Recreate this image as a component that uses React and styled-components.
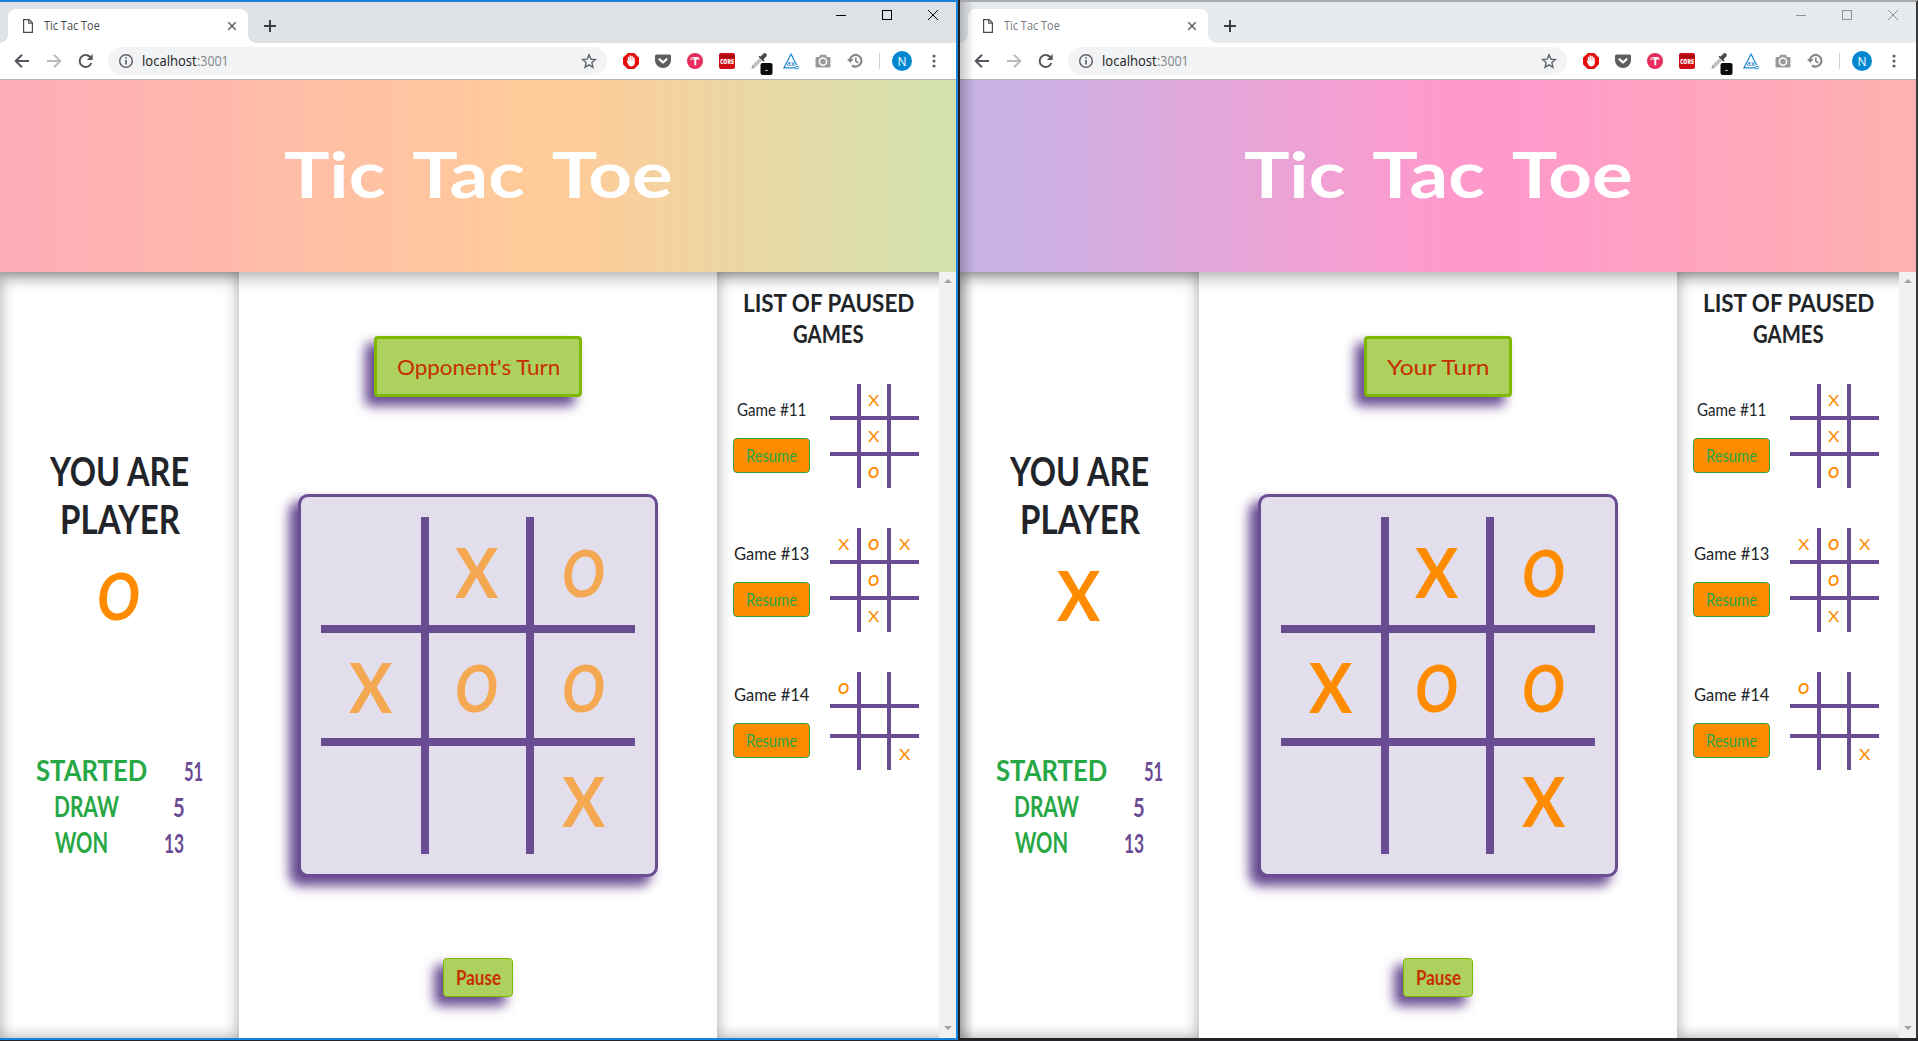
import React, { useLayoutEffect, useRef, useState } from "react";
import styled, { createGlobalStyle } from "styled-components";

const GlobalStyle = createGlobalStyle`
  * { box-sizing: border-box; }
  body { margin: 0; background: #1b1b1b; overflow: hidden; }
`;

const purple = "#6a4c93";
const uiFont = `"Open Sans", "Noto Sans", sans-serif`;
const handFont = `Lato, "Open Sans", sans-serif`;

/* ---------- text that fills a known width ---------- */

const FitBox = styled.span`
  display: block;
  flex: none;
  width: ${(p) => p.$width}px;
  height: ${(p) => p.$line}px;
  line-height: ${(p) => p.$line}px;
  font-size: ${(p) => p.$size}px;
  font-weight: ${(p) => p.$weight || 400};
  font-style: ${(p) => (p.$italic ? "italic" : "normal")};
  color: ${(p) => p.$color || "inherit"};
  word-spacing: ${(p) => p.$word || 0}px;
`;

const FitInner = styled.span`
  display: inline-block;
  vertical-align: top;
  white-space: nowrap;
  transform-origin: 0 50%;
`;

function Fit({ children, width, ...rest }) {
  const ref = useRef(null);
  const [scale, setScale] = useState(1);
  useLayoutEffect(() => {
    setScale(width / ref.current.offsetWidth);
  }, [width, children]);
  return (
    <FitBox $width={width} {...rest}>
      <FitInner ref={ref} style={{ transform: `scaleX(${scale})` }}>
        {children}
      </FitInner>
    </FitBox>
  );
}

/* ---------- desktop and window frame ---------- */

const Desktop = styled.div`
  display: flex;
  width: 1918px;
  height: 1041px;
  gap: 2px;
  background: #222326;
`;

const Frame = styled.div`
  flex: none;
  width: 958px;
  height: ${(p) => (p.$active ? 1040 : 1038)}px;
  border-top: 2px solid ${(p) => (p.$active ? "#1883d7" : "#aaaaaa")};
  border-right: 2px solid ${(p) => (p.$active ? "#1883d7" : "#38393b")};
  border-bottom: ${(p) => (p.$active ? "2px solid #1883d7" : "0")};
  background: #fff;
  overflow: hidden;
  display: flex;
  flex-direction: column;
  position: relative;
`;

const NeighbourShade = styled.div`
  position: absolute;
  z-index: 5;
  top: 0;
  bottom: 0;
  left: 0;
  width: 14px;
  background: linear-gradient(to right, rgba(0, 0, 0, 0.22), rgba(0, 0, 0, 0));
`;

const TabStrip = styled.div`
  height: 41px;
  flex: none;
  display: flex;
  padding: 7px 0 0 8px;
  background: ${(p) => (p.$active ? "#dee1e6" : "#e7eaed")};
`;

const Tab = styled.div`
  position: relative;
  width: 240px;
  height: 34px;
  border-radius: 8px 8px 0 0;
  background: #fff;
  display: flex;
  align-items: center;
  padding: 0 12px 0 15px;
  color: ${(p) => (p.$active ? "#45494d" : "#75797d")};
  font-family: ${uiFont};

  &::before,
  &::after {
    content: "";
    position: absolute;
    bottom: 0;
    width: 8px;
    height: 8px;
  }
  &::before {
    left: -8px;
    background: radial-gradient(circle at 0 0, transparent 7.5px, #fff 8px);
  }
  &::after {
    right: -8px;
    background: radial-gradient(circle at 100% 0, transparent 7.5px, #fff 8px);
  }
`;

const TabTitle = styled.div`
  flex: 1;
  padding-left: 11px;
`;

const Icon = styled.svg`
  display: block;
  flex: none;
  overflow: visible;
`;

const NewTab = styled.div`
  padding: 11px 0 0 16px;
`;

const WindowButtons = styled.div`
  margin-left: auto;
  display: flex;
  gap: 36px;
  padding: 1px 18px 0 0;
  color: ${(p) => (p.$active ? "#000" : "#8f9193")};
`;

const Toolbar = styled.div`
  position: relative;
  z-index: 2;
  height: 36px;
  flex: none;
  display: flex;
  align-items: center;
  padding-left: 14px;
  background: #fff;
`;

const NavButtons = styled.div`
  display: flex;
  gap: 16px;
  width: 94px;
`;

const Omnibox = styled.div`
  width: 499px;
  height: 28px;
  border-radius: 14px;
  background: #f1f3f4;
  display: flex;
  align-items: center;
  padding: 0 10px 0 10px;
  font-family: ${uiFont};
`;

const Address = styled.div`
  flex: 1;
  display: flex;
  padding-left: 8px;
`;

const Extensions = styled.div`
  display: flex;
  gap: 16px;
  padding-left: 16px;
`;

const Divider = styled.div`
  width: 1px;
  height: 16px;
  margin: 0 12px 0 16px;
  background: #d0d2d4;
`;

const Avatar = styled.div`
  width: 20px;
  height: 20px;
  border-radius: 50%;
  background: #0288d1;
  color: #fff;
  display: flex;
  align-items: center;
  justify-content: center;
  font: 12px ${uiFont};
  margin-right: 20px;
`;

/* ---------- page ---------- */

const Page = styled.div`
  flex: 1;
  min-height: 0;
  display: flex;
  flex-direction: column;
  font-family: ${handFont};
  color: #212529;
`;

const Header = styled.header`
  position: relative;
  z-index: 1;
  flex: none;
  height: 193px;
  border-top: 1px solid #b3b5b8;
  padding-bottom: 5px;
  display: flex;
  align-items: center;
  justify-content: center;
  background: ${(p) => p.$fill};
  box-shadow: 0 2px 18px rgba(0, 0, 0, 0.42);
  color: #fff;
`;

const Columns = styled.div`
  flex: 1;
  min-height: 0;
  display: flex;
`;

const Side = styled.aside`
  flex: none;
  width: 239px;
  box-shadow: inset 0 0 15px rgba(0, 0, 0, 0.36);
`;

const PlayerPanel = styled(Side)`
  display: flex;
  flex-direction: column;
  align-items: center;
  padding-top: 175px;
`;

const PlayerMark = styled.div`
  display: flex;
  margin: 13px 0 118px;
  padding-right: 2px;
`;

const StatRow = styled.div`
  align-self: stretch;
  display: flex;
  justify-content: space-evenly;
  height: 36px;
`;

const Main = styled.main`
  width: 478px;
  flex: none;
  display: flex;
  flex-direction: column;
  align-items: center;
  padding-top: 64px;
`;

const Status = styled.div`
  height: 61px;
  width: ${(p) => p.$width}px;
  display: flex;
  align-items: center;
  justify-content: center;
  border: 3px solid #7fb800;
  border-radius: 4px;
  background: #add15e;
  box-shadow: -8px 8px 12px 1px ${purple};
`;

const Board = styled.div`
  margin: 97px 0 81px;
  width: 360px;
  height: 383px;
  padding: 20px;
  border: 3px solid ${purple};
  border-radius: 10px;
  background: #e2deeb;
  box-shadow: -8px 8px 12px 1px ${purple};
`;

const Grid = styled.div`
  display: grid;
  grid-template-columns: ${(p) => p.$cols};
  grid-template-rows: ${(p) => p.$rows};
`;

const Cell = styled.div`
  display: flex;
  align-items: center;
  justify-content: center;
  border: 0 solid ${purple};
  border-right-width: ${(p) => (p.$col < 2 ? p.$bar : 0)}px;
  border-bottom-width: ${(p) => (p.$row < 2 ? p.$bar : 0)}px;
`;

const MarkTone = styled.span`
  display: flex;
  padding: ${(p) => (p.$small ? "0 1px 1px 0" : "2px 2px 0 0")};
  opacity: ${(p) => (p.$dim ? 0.65 : 1)};
`;

const PauseButton = styled.button`
  width: 70px;
  height: 39px;
  padding: 0 0 1px;
  display: flex;
  align-items: center;
  justify-content: center;
  font-family: ${handFont};
  border: 1px solid #7fb800;
  border-radius: 4px;
  background: #add15e;
  box-shadow: -8px 8px 12px 1px ${purple};
`;

const PausedPanel = styled(Side)`
  display: flex;
`;

const PausedList = styled.div`
  width: 222px;
  padding-top: 15px;
`;

const PausedTitle = styled.div`
  display: flex;
  flex-direction: column;
  align-items: center;
  margin-bottom: 35px;
`;

const GameRow = styled.div`
  display: flex;
  align-items: center;
  gap: 20px;
  padding-left: 16px;
  margin-bottom: 40px;
`;

const GameInfo = styled.div`
  width: 77px;
  display: flex;
  flex-direction: column;
  align-items: center;
  gap: 18px;
  padding-top: 1px;
`;

const ResumeButton = styled.button`
  width: 77px;
  height: 35px;
  padding: 0;
  display: flex;
  align-items: center;
  justify-content: center;
  font-family: ${handFont};
  border: 1px solid #28a745;
  border-radius: 4px;
  background: #ff8c00;
`;

const Scrollbar = styled.div`
  position: relative;
  z-index: 2;
  width: 17px;
  flex: none;
  background: #f1f1f1;
  display: flex;
  flex-direction: column;
  justify-content: space-between;
  align-items: center;
  padding: 7px 0 8px;
`;

/* ---------- pieces ---------- */

function Mark({ value, small }) {
  const isX = value === "X";
  if (small) {
    return (
      <Fit width={11} $size={16} $line={20} $weight={isX ? 400 : 700} $italic={!isX} $color="#ff8c00">
        {value}
      </Fit>
    );
  }
  return (
    <Fit width={43} $size={isX ? 69 : 65} $line={78} $weight={700} $italic={!isX} $color="#ff8c00">
      {value}
    </Fit>
  );
}

function Cells({ marks, bar, small, dim }) {
  return marks.split("").map((m, i) => (
    <Cell key={i} $col={i % 3} $row={Math.floor(i / 3)} $bar={bar}>
      {m !== "." && (
        <MarkTone $dim={dim} $small={small}>
          <Mark value={m} small={small} />
        </MarkTone>
      )}
    </Cell>
  ));
}

const games = [
  { id: 11, marks: ".X..X..O.", rows: "36px 36px 32px", width: 69 },
  { id: 13, marks: "XOX.O..X.", rows: "36px 36px 32px", width: 75 },
  { id: 14, marks: "O.......X", rows: "36px 30px 32px", width: 75 },
];

const stats = [
  ["STARTED", 111, "51", 19],
  ["DRAW", 65, "5", 12],
  ["WON", 53, "13", 20],
];

function ExtensionIcons() {
  return (
    <Extensions>
      <Icon width="16" height="16" viewBox="0 0 16 16">
        <path d="M4.8 0h6.4L16 4.8v6.4L11.2 16H4.8L0 11.2V4.8z" fill="#e40d0d" />
        <path d="M5.5 8V4.5M7.3 8V3M9.1 8V3.4M10.9 9V5" stroke="#fff" strokeWidth="1.5" strokeLinecap="round" />
        <path d="M4.8 7.5h6.9v2.6c0 2-1.3 3.3-3.3 3.3-1.6 0-2.5-.8-3.1-2L3.7 8.6l.8-.5z" fill="#fff" />
      </Icon>
      <Icon width="16" height="16" viewBox="0 0 16 16">
        <path d="M1.5 1.5h13q1.5 0 1.5 1.5v4.5a8 7.5 0 0 1-16 0V3q0-1.5 1.5-1.5z" fill="#5d5e60" />
        <path d="M4.5 6.2 8 9.5l3.5-3.3" fill="none" stroke="#fff" strokeWidth="2.2" strokeLinecap="round" strokeLinejoin="round" />
      </Icon>
      <Icon width="16" height="16" viewBox="0 0 16 16">
        <circle cx="8" cy="8" r="8" fill="#e82c60" />
        <path d="M3.2 6.8q.5-2.800 3-2.800h3.600q2.600 0 3 2.400H9.300v5.200q0 1-1 1t-1-1V6.800z" fill="#fff" />
        <circle cx="5.600" cy="5.700" r=".9" fill="#e82c60" />
      </Icon>
      <Icon width="16" height="16" viewBox="0 0 16 16">
        <rect width="16" height="16" rx="2" fill="#d40d12" />
        <rect y="2" width="16" height="3" fill="#a90e12" />
        <text x="8" y="10.5" textAnchor="middle" textLength="14" lengthAdjust="spacingAndGlyphs" fontFamily="Open Sans" fontWeight="800" fontSize="7" fill="#fff">CORS</text>
      </Icon>
      <Icon width="16" height="16" viewBox="0 0 16 16">
        <path d="M9 5.5 1.5 13 1 15.2 3 14.5 10.6 7" fill="#ddd" stroke="#8b8b8b" strokeWidth="1" />
        <path d="M7.5 3.7l5 5 1-1-1-1.5L15.5 3.3q.8-1.6-.3-2.7t-2.7-.2L9.8 3.4 8.5 2.7z" fill="#4a4a4a" />
        <rect x="9.5" y="10" width="12" height="12" rx="2" fill="#0c0c0c" />
        <path d="M14.5 17.5h2" stroke="#fff" strokeWidth="1" />
      </Icon>
      <Icon width="16" height="16" viewBox="0 0 16 16">
        <path d="M12.8 14.9H.9L8 1.1l5.6 11" fill="none" stroke="#1d86d6" strokeWidth="1.2" />
        <text x="3.8" y="13" fontFamily="Open Sans" fontWeight="600" fontSize="7" textLength="8" lengthAdjust="spacingAndGlyphs" fill="#1d86d6">ax</text>
        <circle cx="14" cy="14.6" r="1.4" fill="#fff" stroke="#1d86d6" />
      </Icon>
      <Icon width="16" height="16" viewBox="0 0 16 16">
        <path d="M5 1.8h6L12 4h2.5q1 0 1 1v8.5q0 1-1 1h-13q-1 0-1-1V5q0-1 1-1H4z" fill="#999" />
        <circle cx="8" cy="8.6" r="3.6" fill="none" stroke="#fff" strokeWidth="1.5" />
      </Icon>
      <Icon width="16" height="16" viewBox="0 0 16 16">
        <path d="M2.900 7A5.800 5.800 0 1 1 5 12.300" fill="none" stroke="#868686" strokeWidth="2.200" />
        <path d="M0 6h6.600L3.300 10z" fill="#868686" />
        <path d="M8.800 4.600v3.600l2.500 1.500" fill="none" stroke="#868686" strokeWidth="1.600" />
      </Icon>
    </Extensions>
  );
}

function Chrome({ active }) {
  return (
    <>
      <TabStrip $active={active}>
        <Tab $active={active}>
          <Icon width="10" height="14" viewBox="0 0 10 14" fill="none" stroke="#4b4e52" strokeWidth="1.2">
            <path d="M.6.6h5.6l3.2 3.2v9.6H.6z" />
            <path d="M5.8.6v3.6h3.6" />
          </Icon>
          <TabTitle>
            <Fit width={56} $size={12.5} $line={16}>Tic Tac Toe</Fit>
          </TabTitle>
          <Icon width="8" height="8" viewBox="0 0 8 8" stroke="#5f6368" strokeWidth="1.6">
            <path d="M.3.3l7.4 7.4M7.7.3.3 7.7" />
          </Icon>
        </Tab>
        <NewTab>
          <Icon width="12" height="12" viewBox="0 0 12 12" stroke="#3c4043" strokeWidth="2">
            <path d="M0 6h12M6 0v12" />
          </Icon>
        </NewTab>
        <WindowButtons $active={active}>
          <Icon width="10" height="10" stroke="currentColor" fill="none">
            <path d="M0 5.5h10" />
          </Icon>
          <Icon width="10" height="10" stroke="currentColor" fill="none">
            <rect x=".5" y=".5" width="9" height="9" />
          </Icon>
          <Icon width="10" height="10" stroke="currentColor" fill="none">
            <path d="M0 0l10 10M10 0L0 10" />
          </Icon>
        </WindowButtons>
      </TabStrip>
      <Toolbar>
        <NavButtons>
          <Icon width="16" height="14" viewBox="0 0 16 14" fill="none" stroke="#55585d" strokeWidth="2">
            <path d="M15 7H2M8 .7 1.7 7 8 13.3" />
          </Icon>
          <Icon width="16" height="14" viewBox="0 0 16 14" fill="none" stroke="#babcbe" strokeWidth="2">
            <path d="M1 7h13M8 .7 14.3 7 8 13.3" />
          </Icon>
          <Icon width="14" height="14" viewBox="-.7 0 14 14" fill="none" stroke="#55585d" strokeWidth="2">
            <path d="M12.6 9A6 6 0 1 1 11.3 2.8L12.500 4" />
            <path d="M14 0v6H8z" fill="#55585d" stroke="none" />
          </Icon>
        </NavButtons>
        <Omnibox>
          <Icon width="16" height="16" viewBox="0 0 16 16" fill="none" stroke="#5f6368" strokeWidth="1.5">
            <circle cx="8" cy="8" r="6.3" />
            <path d="M8 7v4.5M8 4.2v1.6" strokeWidth="1.7" />
          </Icon>
          <Address>
            <Fit width={55} $size={14} $line={20} $color="#202124">localhost</Fit>
            <Fit width={32} $size={14} $line={20} $color="#80868b">:3001</Fit>
          </Address>
          <Icon width="16" height="16" viewBox="0 0 16 16" fill="none" stroke="#5f6368" strokeWidth="1.4">
            <path d="M8 1.8l1.8 4.3 4.6.4-3.5 3.1 1 4.6L8 11.8l-3.9 2.4 1-4.6L1.6 6.5l4.6-.4z" />
          </Icon>
        </Omnibox>
        <ExtensionIcons />
        <Divider />
        <Avatar>N</Avatar>
        <Icon width="4" height="14" viewBox="0 0 4 14" fill="#5f6368">
          <circle cx="2" cy="2" r="1.6" />
          <circle cx="2" cy="7" r="1.6" />
          <circle cx="2" cy="12" r="1.6" />
        </Icon>
      </Toolbar>
    </>
  );
}

function GameWindow({ active, fill, player, status, statusWidth, textWidth }) {
  return (
    <Frame $active={active}>
      {!active && <NeighbourShade />}
      <Chrome active={active} />
      <Page>
        <Header $fill={fill}>
          <Fit width={389} $size={64} $line={76} $weight={700} $word={9}>Tic Tac Toe</Fit>
        </Header>
        <Columns>
          <PlayerPanel>
            <Fit width={139} $size={40} $line={48} $weight={700}>YOU ARE</Fit>
            <Fit width={120} $size={40} $line={48} $weight={700}>PLAYER</Fit>
            <PlayerMark>
              <Mark value={player} />
            </PlayerMark>
            {stats.map(([label, w, value, vw]) => (
              <StatRow key={label}>
                <Fit width={w} $size={28} $line={36} $weight={700} $color="#28a745">{label}</Fit>
                <Fit width={vw} $size={27} $line={38} $weight={700} $color={purple}>{value}</Fit>
              </StatRow>
            ))}
          </PlayerPanel>
          <Main>
            <Status $width={statusWidth}>
              <Fit width={textWidth} $size={21} $line={32} $color="#c62f00">{status}</Fit>
            </Status>
            <Board>
              <Grid $cols="108px 105px 101px" $rows="116px 113px 108px">
                <Cells marks=".XOXOO..X" bar={8} dim={active} />
              </Grid>
            </Board>
            <PauseButton>
              <Fit width={45} $size={20} $line={30} $weight={700} $color="#c62f00">Pause</Fit>
            </PauseButton>
          </Main>
          <PausedPanel>
            <PausedList>
              <PausedTitle>
                <Fit width={171} $size={24} $line={31} $weight={700}>LIST OF PAUSED</Fit>
                <Fit width={71} $size={24} $line={31} $weight={700}>GAMES</Fit>
              </PausedTitle>
              {games.map((g) => (
                <GameRow key={g.id}>
                  <GameInfo>
                    <Fit width={g.width} $size={16.5} $line={20}>{`Game #${g.id}`}</Fit>
                    <ResumeButton>
                      <Fit width={51} $size={17} $line={24} $color="#28a745">Resume</Fit>
                    </ResumeButton>
                  </GameInfo>
                  <Grid $cols="31px 30px 28px" $rows={g.rows}>
                    <Cells marks={g.marks} bar={4} small />
                  </Grid>
                </GameRow>
              ))}
            </PausedList>
            <Scrollbar>
              <Icon width="8" height="4" fill="#a3a3a3"><path d="M0 4 4 0l4 4z" /></Icon>
              <Icon width="8" height="4" fill="#a3a3a3"><path d="M0 0l4 4 4-4z" /></Icon>
            </Scrollbar>
          </PausedPanel>
        </Columns>
      </Page>
    </Frame>
  );
}

export default function App() {
  return (
    <>
      <GlobalStyle />
      <Desktop>
        <GameWindow
          active
          fill="linear-gradient(to right, #ffadb6 0%, #ffadb6 4%, #ffcc99 56%, #ffcc99 60%, #d3e2ae 98%)"
          player="O"
          status="Opponent's Turn"
          statusWidth={208}
          textWidth={163}
        />
        <GameWindow
          fill="linear-gradient(to right, #c8b2e6 0%, #c8b2e6 4%, #ff99cc 51%, #ff99cc 58%, #ffb0b0 98%)"
          player="X"
          status="Your Turn"
          statusWidth={148}
          textWidth={103}
        />
      </Desktop>
    </>
  );
}
